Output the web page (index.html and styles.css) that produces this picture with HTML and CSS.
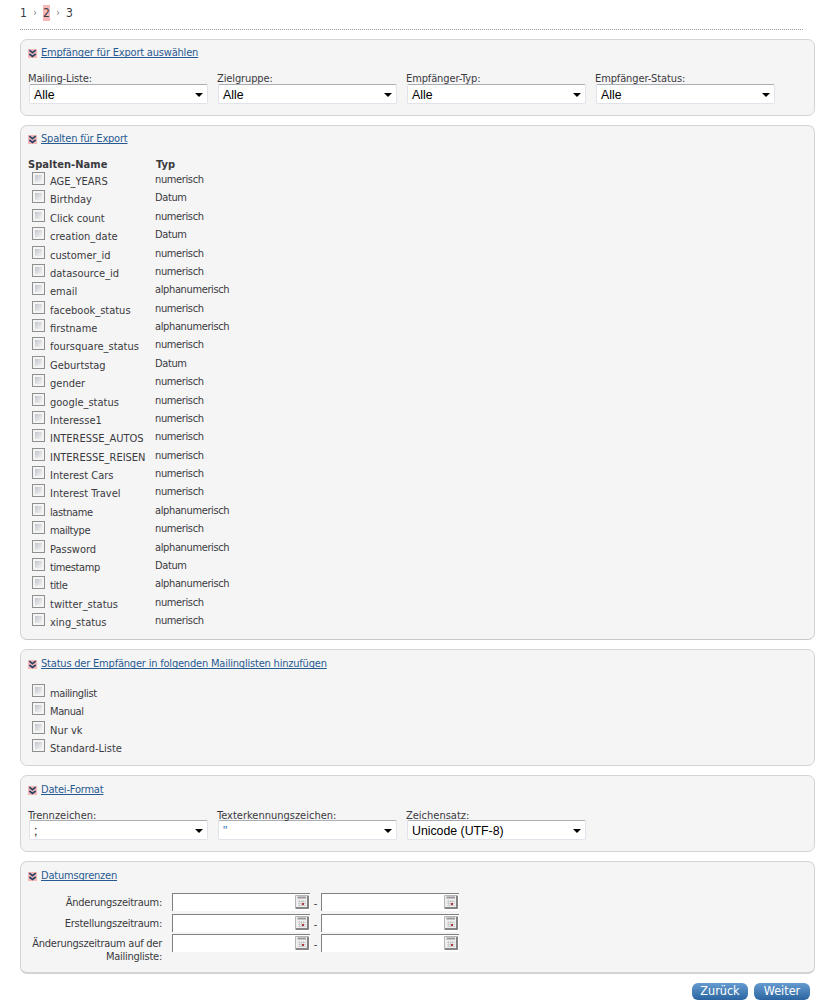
FILE: index.html
```html
<!DOCTYPE html>
<html lang="de">
<head>
<meta charset="utf-8">
<title>Export</title>
<link rel="stylesheet" href="styles.css">
</head>
<body>
<svg class="defs" width="0" height="0">
  <symbol id="chev" viewBox="0 0 9 9"><rect width="9" height="9" fill="#f8b8b8"/><path d="M1.3 1.2 4.5 3.7 7.7 1.2M1.3 5 4.5 7.5 7.7 5" fill="none" stroke="#2a4468" stroke-width="1.7"/></symbol>
  <symbol id="cal" viewBox="0 0 14 14"><rect width="14" height="14" rx="1" fill="#b5b5b5"/><path d="M13 1v12H1" fill="none" stroke="#777" stroke-width="1.6"/><rect x="1" y="1" width="11" height="11" fill="#eee"/><rect x="2.5" y="1.5" width="8.500" height="2" fill="#999"/><path d="M3 6.500h8M3 8.500h8M3 10.500h8M4.500 5v6M6.500 5v6M8.500 5v6" stroke="#c4c4c4" stroke-width=".7"/><rect x="7" y="8" width="2" height="2" fill="#b03a44"/></symbol>
</svg>
<main class="page">
  <nav class="steps"><span>1</span><i>›</i><b>2</b><i>›</i><span>3</span></nav>

  <section class="panel panel-recipients">
    <h2 class="title"><svg class="chev"><use href="#chev"/></svg><a>Empfänger für Export auswählen</a></h2>
    <div class="fields">
      <div class="field"><label>Mailing-Liste:</label><div class="select">Alle</div></div>
      <div class="field"><label>Zielgruppe:</label><div class="select">Alle</div></div>
      <div class="field"><label>Empfänger-Typ:</label><div class="select">Alle</div></div>
      <div class="field"><label>Empfänger-Status:</label><div class="select">Alle</div></div>
    </div>
  </section>

  <section class="panel panel-columns">
    <h2 class="title"><svg class="chev"><use href="#chev"/></svg><a>Spalten für Export</a></h2>
    <div class="head"><span>Spalten-Name</span><span>Typ</span></div>
    <div class="row"><span class="box"></span><span class="name">AGE_YEARS</span><span class="type">numerisch</span></div>
    <div class="row"><span class="box"></span><span class="name">Birthday</span><span class="type">Datum</span></div>
    <div class="row"><span class="box"></span><span class="name">Click count</span><span class="type">numerisch</span></div>
    <div class="row"><span class="box"></span><span class="name">creation_date</span><span class="type">Datum</span></div>
    <div class="row"><span class="box"></span><span class="name">customer_id</span><span class="type">numerisch</span></div>
    <div class="row"><span class="box"></span><span class="name">datasource_id</span><span class="type">numerisch</span></div>
    <div class="row"><span class="box"></span><span class="name">email</span><span class="type">alphanumerisch</span></div>
    <div class="row"><span class="box"></span><span class="name">facebook_status</span><span class="type">numerisch</span></div>
    <div class="row"><span class="box"></span><span class="name">firstname</span><span class="type">alphanumerisch</span></div>
    <div class="row"><span class="box"></span><span class="name">foursquare_status</span><span class="type">numerisch</span></div>
    <div class="row"><span class="box"></span><span class="name">Geburtstag</span><span class="type">Datum</span></div>
    <div class="row"><span class="box"></span><span class="name">gender</span><span class="type">numerisch</span></div>
    <div class="row"><span class="box"></span><span class="name">google_status</span><span class="type">numerisch</span></div>
    <div class="row"><span class="box"></span><span class="name">Interesse1</span><span class="type">numerisch</span></div>
    <div class="row"><span class="box"></span><span class="name">INTERESSE_AUTOS</span><span class="type">numerisch</span></div>
    <div class="row"><span class="box"></span><span class="name">INTERESSE_REISEN</span><span class="type">numerisch</span></div>
    <div class="row"><span class="box"></span><span class="name">Interest Cars</span><span class="type">numerisch</span></div>
    <div class="row"><span class="box"></span><span class="name">Interest Travel</span><span class="type">numerisch</span></div>
    <div class="row"><span class="box"></span><span class="name tight">lastname</span><span class="type">alphanumerisch</span></div>
    <div class="row"><span class="box"></span><span class="name tight">mailtype</span><span class="type">numerisch</span></div>
    <div class="row"><span class="box"></span><span class="name">Password</span><span class="type">alphanumerisch</span></div>
    <div class="row"><span class="box"></span><span class="name tight">timestamp</span><span class="type">Datum</span></div>
    <div class="row"><span class="box"></span><span class="name tight">title</span><span class="type">alphanumerisch</span></div>
    <div class="row"><span class="box"></span><span class="name">twitter_status</span><span class="type">numerisch</span></div>
    <div class="row"><span class="box"></span><span class="name">xing_status</span><span class="type">numerisch</span></div>
  </section>

  <section class="panel panel-lists">
    <h2 class="title"><svg class="chev"><use href="#chev"/></svg><a>Status der Empfänger in folgenden Mailinglisten hinzufügen</a></h2>
    <div class="lists">
      <div class="row"><span class="box"></span><span class="name tight">mailinglist</span></div>
      <div class="row"><span class="box"></span><span class="name tight">Manual</span></div>
      <div class="row"><span class="box"></span><span class="name">Nur vk</span></div>
      <div class="row"><span class="box"></span><span class="name">Standard-Liste</span></div>
    </div>
  </section>

  <section class="panel panel-format">
    <h2 class="title"><svg class="chev"><use href="#chev"/></svg><a>Datei-Format</a></h2>
    <div class="fields">
      <div class="field"><label>Trennzeichen:</label><div class="select">;</div></div>
      <div class="field"><label>Texterkennungszeichen:</label><div class="select quote">"</div></div>
      <div class="field"><label>Zeichensatz:</label><div class="select">Unicode (UTF-8)</div></div>
    </div>
  </section>

  <section class="panel panel-dates">
    <h2 class="title"><svg class="chev"><use href="#chev"/></svg><a>Datumsgrenzen</a></h2>
    <div class="dates">
      <div class="range"><label>Änderungszeitraum:</label><div class="date"><svg class="cal"><use href="#cal"/></svg></div><span class="dash">-</span><div class="date"><svg class="cal"><use href="#cal"/></svg></div></div>
      <div class="range"><label>Erstellungszeitraum:</label><div class="date"><svg class="cal"><use href="#cal"/></svg></div><span class="dash">-</span><div class="date"><svg class="cal"><use href="#cal"/></svg></div></div>
      <div class="range"><label>Änderungszeitraum auf der<br>Mailingliste:</label><div class="date"><svg class="cal"><use href="#cal"/></svg></div><span class="dash">-</span><div class="date"><svg class="cal"><use href="#cal"/></svg></div></div>
    </div>
  </section>

  <footer class="actions"><a class="button">Zurück</a><a class="button">Weiter</a></footer>
</main>
</body>
</html>
```
FILE: styles.css
```css
* { box-sizing: border-box; }
body {
  margin: 0;
  background: #fff;
  color: #3a3a3e;
  font: 11px/13px "DejaVu Sans Condensed", "DejaVu Sans", sans-serif;
  font-stretch: condensed;
  letter-spacing: -0.25px;
}
.defs { display: none; }
.page { width: 821px; height: 1007px; padding: 0 6px 0 20px; overflow: hidden; }
.steps {
  display: flex;
  align-items: flex-start;
  height: 30px;
  width: 783px;
  padding-top: 5px;
  border-bottom: 1px dotted #999;
  font-size: 12px;
  line-height: 16px;
  letter-spacing: 0;
}
.steps span { width: 7px; }
.steps i { width: 16px; text-align: center; font-style: normal; font-size: 10px; color: #777; line-height: 15px; }
.steps b { width: 7px; height: 16px; background: #f8b8b8; font-weight: normal; }
.panel {
  width: 795px;
  margin-bottom: 9px;
  padding: 6px 7px 0;
  background: #f5f5f5;
  border: 1px solid #d4d4d4;
  border-radius: 7px;
}
.panel-recipients { height: 77px; margin-top: 9px; }
.panel-columns { height: 515px; }
.panel-lists { height: 117px; }
.panel-format { height: 77px; }
.panel-dates { height: 113px; border-bottom-width: 2px; }
.panel-columns { border-bottom-color: #c8c8c8; }
.title { display: flex; margin: 0; font: inherit; height: 13px; letter-spacing: -0.2px; }
.title a {
  color: #285a92;
  text-decoration: underline;
  text-underline-offset: 1px;
  text-decoration-skip-ink: none;
}
.chev { width: 9px; height: 9px; margin: 3px 4px 0 0; }
.fields { display: flex; gap: 9px; margin-top: 13px; }
.field { width: 180px; }
.field label { display: block; height: 12px; letter-spacing: -0.12px; }
.panel-format .title,
.panel-dates .title,
.panel-lists .title { position: relative; top: 1px; }
.panel-format label { position: relative; top: 1px; letter-spacing: 0; }
.select {
  display: flex;
  justify-content: space-between;
  align-items: center;
  width: 179px;
  height: 20px;
  margin-left: 1px;
  padding: 2px 4px 0;
  background: #fff;
  border: 1px solid #e2e3ea;
  border-top-color: #abadb3;
  border-radius: 2px;
  color: #000;
  font: 12.3px/16px "Liberation Sans", sans-serif;
  letter-spacing: 0;
}
.select::after {
  content: "";
  border: 4px solid transparent;
  border-top-color: #000;
  border-bottom: 0;
}
.quote { color: #3a78b8; }
.quote::after { border-top-color: #000; }
.head {
  display: grid;
  grid-template-columns: 128px 1fr;
  margin-top: 13px;
  height: 13px;
  font-weight: bold;
  letter-spacing: 0.05px;
}
.row {
  display: grid;
  grid-template-columns: 22px 105px 1fr;
  height: 18.38px;
}
.box {
  width: 13px;
  height: 13px;
  margin: 1px 0 0 4px;
  border: 1px solid #8e8f8f;
  background: linear-gradient(135deg, #c0c5cc, #f4f4f4) content-box, #f4f4f4;
  padding: 2px;
}
.name { padding-top: 4px; letter-spacing: 0; }
.name.tight { letter-spacing: -0.4px; }
.type { padding-top: 2px; letter-spacing: -0.37px; }
.lists { margin-top: 14px; }
.dates { margin-top: 12px; }
.range { display: flex; height: 20.5px; }
.range label { width: 134px; margin-right: 10px; padding-top: 3px; text-align: right; }
.range:last-child label { padding-top: 3px; }
.date {
  display: flex;
  justify-content: flex-end;
  width: 138px;
  height: 18px;
  padding: 1px 1px 0 0;
  background: #fff;
  border-top: 1px solid #808080;
  border-left: 1px solid #808080;
}
.cal { width: 14px; height: 14px; }
.dash { width: 11px; padding-top: 4px; text-align: center; }
.actions { display: flex; justify-content: flex-end; gap: 6px; padding-right: 5px; }
.button {
  width: 56px;
  height: 17px;
  border-radius: 6px;
  background: linear-gradient(#659bcf, #2b64a0);
  color: #fff;
  font-size: 12.5px;
  line-height: 16px;
  letter-spacing: 0;
  text-align: center;
}
```
